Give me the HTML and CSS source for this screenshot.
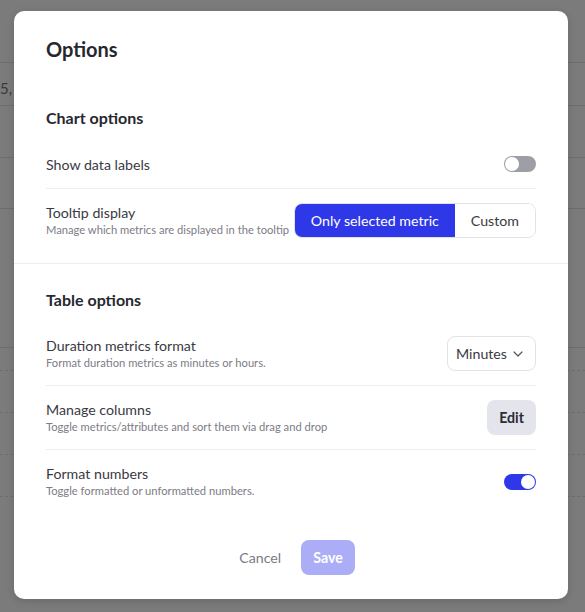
FILE: index.html
```html
<!DOCTYPE html>
<html lang="en">
<head>
  <meta charset="UTF-8" />
  <meta name="viewport" content="width=device-width, initial-scale=1.0"/>
  <title>Options</title>
  <link rel="stylesheet" href="styles.css">
</head>
<body>

<!-- page behind the overlay -->
<div class="page">
  <div class="page-row row-a"><span class="cell-text">5, 2</span></div>
  <div class="page-row row-b"></div>
  <div class="page-row row-c"></div>
  <div class="page-row row-d"></div>
  <div class="page-row row-e"></div>
  <div class="page-row row-f dashed"></div>
  <div class="page-row row-f dashed"></div>
  <div class="page-row row-f dashed"></div>
  <div class="page-row row-f dashed"></div>
</div>

<div class="overlay">
  <div class="modal">
    <h1 class="modal-title">Options</h1>

    <div class="section">
      <h2 class="section-title">Chart options</h2>

      <div class="option">
        <div class="option-text">
          <div class="option-label">Show data labels</div>
        </div>
        <span class="toggle"><span class="knob"></span></span>
      </div>

      <div class="option">
        <div class="option-text">
          <div class="option-label">Tooltip display</div>
          <div class="option-hint">Manage which metrics are displayed in the tooltip</div>
        </div>
        <div class="segmented">
          <button class="seg active">Only selected metric</button>
          <button class="seg">Custom</button>
        </div>
      </div>
    </div>

    <div class="section">
      <h2 class="section-title">Table options</h2>

      <div class="option">
        <div class="option-text">
          <div class="option-label">Duration metrics format</div>
          <div class="option-hint">Format duration metrics as minutes or hours.</div>
        </div>
        <button class="select">
          Minutes
          <svg width="10" height="6" viewBox="0 0 10 6"><path d="M1 1l4 4 4-4" fill="none" stroke="#55555e" stroke-width="1.2" stroke-linecap="round" stroke-linejoin="round"/></svg>
        </button>
      </div>

      <div class="option">
        <div class="option-text">
          <div class="option-label">Manage columns</div>
          <div class="option-hint">Toggle metrics/attributes and sort them via drag and drop</div>
        </div>
        <button class="btn-secondary">Edit</button>
      </div>

      <div class="option">
        <div class="option-text">
          <div class="option-label">Format numbers</div>
          <div class="option-hint">Toggle formatted or unformatted numbers.</div>
        </div>
        <span class="toggle on"><span class="knob"></span></span>
      </div>
    </div>

    <div class="modal-footer">
      <button class="btn-link">Cancel</button>
      <button class="btn-primary" disabled>Save</button>
    </div>
  </div>
</div>

</body>
</html>
```

FILE: styles.css
```css
body {
  margin: 0;
  padding: 0;
  background: #7b7b7b;
  font-family: Lato, "Noto Sans", sans-serif;
  color: #2b2b33;
  height: 612px;
  overflow: hidden;
}

/* faint table behind the overlay */
.page {
  padding-top: 62px;
}

.page-row {
  border-top: 1px solid #6e6e6e;
  box-sizing: border-box;
}

.row-a {
  height: 43px;
  position: relative;
}

.cell-text {
  position: absolute;
  left: 0;
  top: 16px;
  font-size: 15px;
  color: #3a3a3a;
}

.row-b {
  height: 52px;
}

.row-c {
  height: 51px;
}

.row-d {
  height: 139px;
}

.row-e {
  height: 23px;
}

.row-f {
  height: 42px;
}

.dashed {
  border-top: 1px dashed #6e6e6e;
}

.overlay {
  position: absolute;
  top: 0;
  left: 0;
  right: 0;
  bottom: 0;
}

.modal {
  position: absolute;
  top: 11px;
  left: 14px;
  width: 554px;
  height: 588px;
  box-sizing: border-box;
  background: #fff;
  border-radius: 10px;
  box-shadow: 0 2px 8px rgba(0,0,0,0.15);
  padding-top: 24px;
}

.modal-title {
  margin: 0 32px;
  font-size: 20px;
  line-height: 28px;
  font-weight: 700;
  color: #27272f;
}

.section {
  padding: 43px 32px 11px;
}

.section + .section {
  border-top: 1px solid #eeeef2;
  padding-top: 24px;
  padding-bottom: 0;
}

.section-title {
  margin: 0 0 10px;
  font-size: 16px;
  line-height: 24px;
  font-weight: 700;
  color: #27272f;
}

.option {
  display: flex;
  align-items: center;
  justify-content: space-between;
  gap: 2px;
  padding: 14px 0;
  min-height: 20px;
}

.option + .option {
  border-top: 1px solid #ececf1;
}

.option-text {
  white-space: nowrap;
  min-width: 0;
}

.option-label {
  font-size: 14.2px;
  line-height: 19px;
  color: #3a3a43;
}

.option-hint {
  font-size: 11.2px;
  line-height: 16px;
  color: #7c7c86;
}

.toggle {
  position: relative;
  width: 32px;
  height: 16px;
  border-radius: 8px;
  background: #9e9ea7;
  flex-shrink: 0;
}

.toggle .knob {
  position: absolute;
  top: 1px;
  left: 1px;
  width: 14px;
  height: 14px;
  border-radius: 50%;
  background: #fff;
}

.toggle.on {
  background: #2f38e8;
}

.toggle.on .knob {
  left: 17px;
}

button {
  font-family: inherit;
  cursor: pointer;
}

.segmented {
  display: flex;
  height: 35px;
  border: 1px solid #e2e2ea;
  border-radius: 8px;
  box-sizing: border-box;
  overflow: hidden;
  flex-shrink: 0;
}

.seg {
  border: none;
  background: #fff;
  color: #3a3a43;
  font-size: 14.2px;
  padding: 0 16px;
}

.seg.active {
  background: #2f38e8;
  color: #fff;
}

.select {
  display: flex;
  align-items: center;
  gap: 6px;
  height: 35px;
  padding: 0 12px 0 8px;
  border: 1px solid #e2e2ea;
  border-radius: 8px;
  background: #fff;
  color: #3a3a43;
  font-size: 14.2px;
}

.btn-secondary {
  height: 35px;
  padding: 0 12px;
  border: none;
  border-radius: 8px;
  background: #e4e4ec;
  color: #2b2b33;
  font-size: 14.2px;
  font-weight: 700;
}

.modal-footer {
  display: flex;
  justify-content: center;
  gap: 4px;
  padding-top: 27px;
  margin-left: -4px;
}

.btn-link {
  height: 35px;
  padding: 0 16px;
  border: none;
  background: none;
  color: #7a7a84;
  font-size: 14.2px;
}

.btn-primary {
  height: 35px;
  padding: 0 12px;
  border: none;
  border-radius: 8px;
  background: #abaef6;
  color: #fff;
  font-size: 14.2px;
  font-weight: 700;
}
```
